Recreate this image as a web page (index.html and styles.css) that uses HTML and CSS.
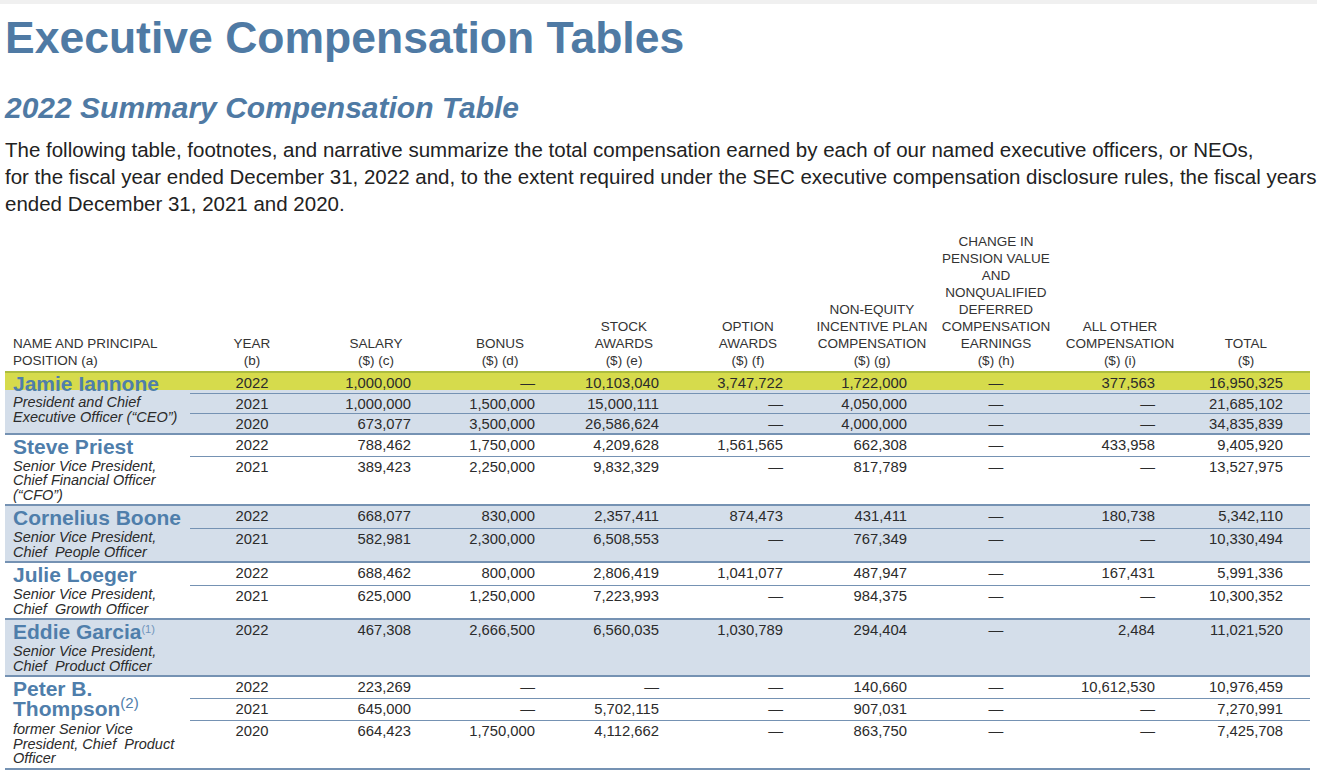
FILE: index.html
```html
<!DOCTYPE html>
<html lang="en">
<head>
<meta charset="utf-8">
<title>Executive Compensation Tables</title>
<link rel="stylesheet" href="styles.css">
</head>
<body>
<div class="page">
  <h1 class="title">Executive Compensation Tables</h1>
  <h2 class="subtitle">2022 Summary Compensation Table</h2>
  <p class="intro">The following table, footnotes, and narrative summarize the total compensation earned by each of our named executive officers, or NEOs,<br>for the fiscal year ended December 31, 2022 and, to the extent required under the SEC executive compensation disclosure rules, the fiscal years ended December 31, 2021 and 2020.</p>

  <table class="sct">
    <colgroup>
      <col class="c-name">
      <col class="c-num"><col class="c-num"><col class="c-num"><col class="c-num">
      <col class="c-num"><col class="c-num"><col class="c-num"><col class="c-num">
      <col class="c-last">
    </colgroup>
    <thead>
      <tr>
        <th class="h-name">NAME AND PRINCIPAL<br>POSITION (a)</th>
        <th>YEAR<br>(b)</th>
        <th>SALARY<br>($) (c)</th>
        <th>BONUS<br>($) (d)</th>
        <th>STOCK<br>AWARDS<br>($) (e)</th>
        <th>OPTION<br>AWARDS<br>($) (f)</th>
        <th>NON-EQUITY<br>INCENTIVE PLAN<br>COMPENSATION<br>($) (g)</th>
        <th>CHANGE IN<br>PENSION VALUE<br>AND<br>NONQUALIFIED<br>DEFERRED<br>COMPENSATION<br>EARNINGS<br>($) (h)</th>
        <th>ALL OTHER<br>COMPENSATION<br>($) (i)</th>
        <th>TOTAL<br>($)</th>
      </tr>
    </thead>

    <tbody class="grp shade">
      <tr class="hl sep">
        <td class="nm nm-tight"><span class="name">Jamie Iannone</span></td>
        <td class="yr">2022</td><td class="n">1,000,000</td><td class="n">—</td><td class="n">10,103,040</td><td class="n">3,747,722</td><td class="n">1,722,000</td><td class="d">—</td><td class="n">377,563</td><td class="n">16,950,325</td>
      </tr>
      <tr class="sep">
        <td class="pos pos-tight" rowspan="2">President and Chief Executive Officer (“CEO”)</td>
        <td class="yr">2021</td><td class="n">1,000,000</td><td class="n">1,500,000</td><td class="n">15,000,111</td><td class="n">—</td><td class="n">4,050,000</td><td class="d">—</td><td class="n">—</td><td class="n">21,685,102</td>
      </tr>
      <tr>
        <td class="yr">2020</td><td class="n">673,077</td><td class="n">3,500,000</td><td class="n">26,586,624</td><td class="n">—</td><td class="n">4,000,000</td><td class="d">—</td><td class="n">—</td><td class="n">34,835,839</td>
      </tr>
    </tbody>

    <tbody class="grp">
      <tr class="sep">
        <td class="nm"><span class="name">Steve Priest</span></td>
        <td class="yr">2022</td><td class="n">788,462</td><td class="n">1,750,000</td><td class="n">4,209,628</td><td class="n">1,561,565</td><td class="n">662,308</td><td class="d">—</td><td class="n">433,958</td><td class="n">9,405,920</td>
      </tr>
      <tr>
        <td class="pos">Senior Vice President, Chief Financial Officer (“CFO”)</td>
        <td class="yr">2021</td><td class="n">389,423</td><td class="n">2,250,000</td><td class="n">9,832,329</td><td class="n">—</td><td class="n">817,789</td><td class="d">—</td><td class="n">—</td><td class="n">13,527,975</td>
      </tr>
    </tbody>

    <tbody class="grp shade">
      <tr class="sep">
        <td class="nm"><span class="name">Cornelius Boone</span></td>
        <td class="yr">2022</td><td class="n">668,077</td><td class="n">830,000</td><td class="n">2,357,411</td><td class="n">874,473</td><td class="n">431,411</td><td class="d">—</td><td class="n">180,738</td><td class="n">5,342,110</td>
      </tr>
      <tr>
        <td class="pos">Senior Vice President, Chief&nbsp; People Officer</td>
        <td class="yr">2021</td><td class="n">582,981</td><td class="n">2,300,000</td><td class="n">6,508,553</td><td class="n">—</td><td class="n">767,349</td><td class="d">—</td><td class="n">—</td><td class="n">10,330,494</td>
      </tr>
    </tbody>

    <tbody class="grp">
      <tr class="sep">
        <td class="nm"><span class="name">Julie Loeger</span></td>
        <td class="yr">2022</td><td class="n">688,462</td><td class="n">800,000</td><td class="n">2,806,419</td><td class="n">1,041,077</td><td class="n">487,947</td><td class="d">—</td><td class="n">167,431</td><td class="n">5,991,336</td>
      </tr>
      <tr>
        <td class="pos">Senior Vice President, Chief&nbsp; Growth Officer</td>
        <td class="yr">2021</td><td class="n">625,000</td><td class="n">1,250,000</td><td class="n">7,223,993</td><td class="n">—</td><td class="n">984,375</td><td class="d">—</td><td class="n">—</td><td class="n">10,300,352</td>
      </tr>
    </tbody>

    <tbody class="grp shade">
      <tr>
        <td class="nm"><span class="name">Eddie Garcia<sup class="fn-sm">(1)</sup></span></td>
        <td class="yr">2022</td><td class="n">467,308</td><td class="n">2,666,500</td><td class="n">6,560,035</td><td class="n">1,030,789</td><td class="n">294,404</td><td class="d">—</td><td class="n">2,484</td><td class="n">11,021,520</td>
      </tr>
      <tr>
        <td class="pos">Senior Vice President, Chief&nbsp; Product Officer</td>
        <td></td><td></td><td></td><td></td><td></td><td></td><td></td><td></td><td></td>
      </tr>
    </tbody>

    <tbody class="grp">
      <tr class="sep">
        <td class="nm nm-2" rowspan="2"><span class="name">Peter B. Thompson<sup class="fn-lg">(2)</sup></span></td>
        <td class="yr">2022</td><td class="n">223,269</td><td class="n">—</td><td class="n">—</td><td class="n">—</td><td class="n">140,660</td><td class="d">—</td><td class="n">10,612,530</td><td class="n">10,976,459</td>
      </tr>
      <tr class="sep">
        <td class="yr">2021</td><td class="n">645,000</td><td class="n">—</td><td class="n">5,702,115</td><td class="n">—</td><td class="n">907,031</td><td class="d">—</td><td class="n">—</td><td class="n">7,270,991</td>
      </tr>
      <tr>
        <td class="pos">former Senior Vice President, Chief&nbsp; Product Officer</td>
        <td class="yr">2020</td><td class="n">664,423</td><td class="n">1,750,000</td><td class="n">4,112,662</td><td class="n">—</td><td class="n">863,750</td><td class="d">—</td><td class="n">—</td><td class="n">7,425,708</td>
      </tr>
    </tbody>
  </table>
</div>
</body>
</html>
```

FILE: styles.css
```css
html, body {
  margin: 0;
  padding: 0;
  background: #ffffff;
}

body {
  font-family: "Liberation Sans", Arial, sans-serif;
  color: #262626;
}

.page {
  border-top: 4px solid #f0f0f0;
  padding: 0 5px;
}

.title {
  margin: 12px 0 0;
  font-size: 44.5px;
  line-height: 44px;
  font-weight: bold;
  color: #4f7aa4;
}

.subtitle {
  margin: 33px 0 0;
  font-size: 30px;
  line-height: 30px;
  font-weight: bold;
  font-style: italic;
  color: #4f7aa4;
}

.intro {
  margin: 13px 0 0;
  font-size: 20.5px;
  line-height: 27px;
  color: #222222;
  width: 1312px;
}

.sct {
  margin-top: 16px;
  border-collapse: collapse;
  table-layout: fixed;
  width: 1305px;
}

.c-name { width: 185px; }
.c-num { width: 124px; }
.c-last { width: 128px; }

.sct th {
  font-weight: normal;
  font-size: 13.5px;
  line-height: 17px;
  color: #333333;
  text-align: center;
  vertical-align: bottom;
  padding: 0 0 2px;
  border-bottom: 2px solid #adbd3e;
}

.sct th.h-name {
  text-align: left;
  padding-left: 8px;
}

.sct td {
  font-size: 14.8px;
  line-height: 16px;
  color: #2b2b2b;
  vertical-align: top;
  padding: 2px 0 1px;
}

.sct td.yr { text-align: center; }
.sct td.d { text-align: center; }
.sct td.n {
  text-align: right;
  padding-right: 27px;
}

.grp { border-bottom: 2px solid #7592b3; }
.grp.shade { background: #d4deea; }

.sep td.n,
.sep td.yr,
.sep td.d {
  border-bottom: 1.5px solid #7592b3;
}

.hl td {
  background: linear-gradient(#d6db4c 0, #d6db4c 17px, transparent 17px);
}

.sct td.nm {
  padding: 3px 0 2px 8px;
  vertical-align: top;
  font-size: 21px;
  line-height: 17px;
}

.sct td.nm-tight {
  padding: 2px 0 1px 8px;
}

.name {
  font-size: 21px;
  line-height: 17px;
  font-weight: bold;
  color: #4f7eab;
}

.sct td.nm-2 {
  padding: 2px 0 1px 8px;
}

.sct td.nm-2,
.nm-2 .name {
  line-height: 20px;
}

.sct td.pos {
  padding: 2px 0 2px 8px;
  font-size: 14.5px;
  line-height: 14.5px;
  font-style: italic;
  color: #2b2b2b;
}

.sct td.pos-tight {
  padding-bottom: 0;
}

.fn-sm {
  font-size: 11px;
  font-weight: normal;
  vertical-align: top;
  line-height: 0;
  position: relative;
  top: 6px;
  color: #6f94bb;
}

.fn-lg {
  font-size: 15px;
  font-weight: normal;
  vertical-align: top;
  line-height: 0;
  position: relative;
  top: 4px;
  color: #4f7eab;
}
```
